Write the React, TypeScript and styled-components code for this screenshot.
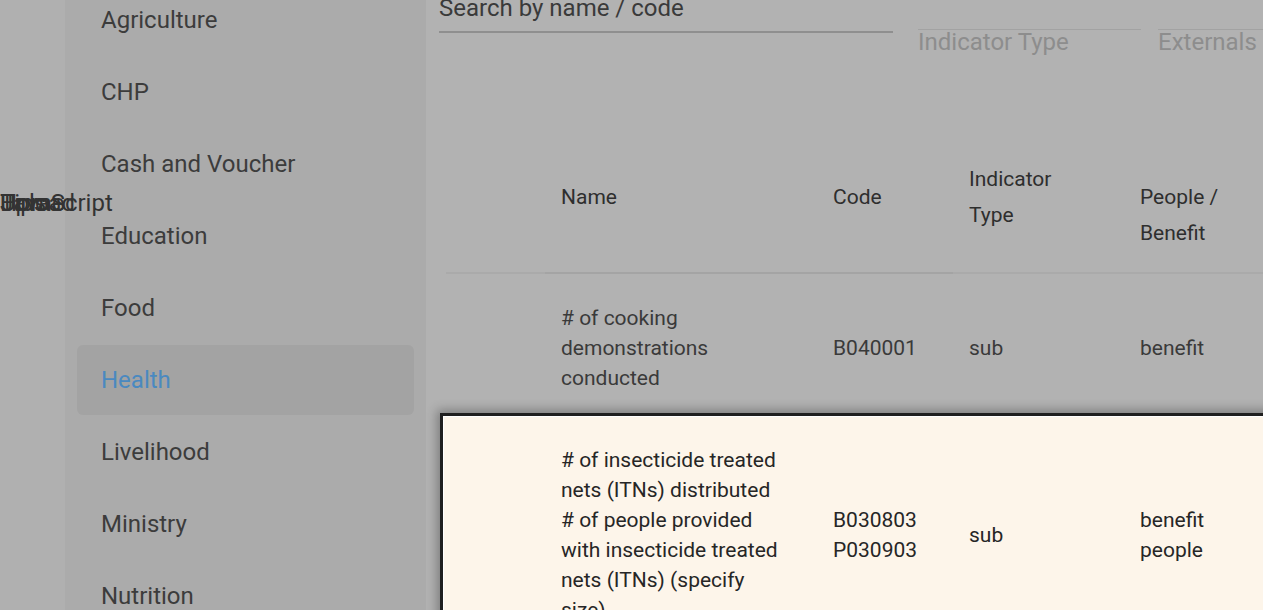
import React from "react";
import styled, { createGlobalStyle } from "styled-components";

const Global = createGlobalStyle`
  html, body { margin: 0; padding: 0; overflow: hidden; background: #b2b2b2; }
  body { font-family: Roboto, "Liberation Sans", Arial, sans-serif; }
  * { box-sizing: border-box; }
`;

const Root = styled.div`
  position: relative;
  display: flex;
  width: 1263px;
  height: 610px;
  overflow: hidden;
`;

const LeftStrip = styled.div`
  width: 65px;
  flex: none;
  background: #b0b0b0;
`;

const Sidebar = styled.nav`
  width: 361px;
  flex: none;
  background: #ababab;
  overflow: hidden;
`;

const NavList = styled.ul`
  list-style: none;
  display: flex;
  flex-direction: column;
  gap: 2px;
  margin: -15px 0 0;
  padding: 0;
`;

const NavItem = styled.li<{ $active?: boolean }>`
  display: flex;
  align-items: center;
  height: 70px;
  margin: 0 12px;
  padding-left: 24px;
  border-radius: 6px;
  font-size: 24px;
  color: ${(p) => (p.$active ? "#4a89c0" : "#3c3c3c")};
  background: ${(p) => (p.$active ? "#a3a3a3" : "transparent")};
`;

const StackedLabels = styled.div`
  position: absolute;
  left: 0;
  top: 189px;
  display: grid;
  font-size: 24px;
  line-height: 28px;
  color: #333;
  z-index: 2;
  & > span {
    grid-area: 1 / 1;
    white-space: nowrap;
  }
`;

const Main = styled.main`
  flex: 1;
  min-width: 0;
  background: #b2b2b2;
  padding-left: 20px;
  overflow: hidden;
  display: flex;
  flex-direction: column;
`;

const FilterBar = styled.div`
  display: flex;
  align-items: flex-start;
  height: 128px;
  margin-top: -6px;
  margin-left: -7px;
  flex: none;
`;

const SearchField = styled.div`
  width: 454px;
  flex: none;
  font-size: 24px;
  line-height: 28px;
  color: #3a3a3a;
  padding-bottom: 9px;
  border-bottom: 2px solid #8f8f8f;
`;

const SelectField = styled.div<{ $w: number; $gap: number }>`
  width: ${(p) => p.$w}px;
  flex: none;
  margin-left: ${(p) => p.$gap}px;
  margin-top: 35px;
  border-top: 1px solid #a2a2a2;
  font-size: 24px;
  line-height: 24px;
  color: #8d8d8d;
  white-space: nowrap;
`;

const Table = styled.div`
  width: 1000px;
  flex: none;
`;

const RowGrid = styled.div`
  display: grid;
  grid-template-columns: 99px 272px 136px 171px 1fr;
`;

const HeadRow = styled(RowGrid)`
  height: 152px;
`;

const HeadCell = styled.div<{ $dark?: boolean; $pad?: number }>`
  display: flex;
  align-items: center;
  padding: ${(p) => p.$pad || 0}px 16px 0;
  font-size: 21px;
  font-weight: 400;
  line-height: 36px;
  color: #2e2e2e;
  border-bottom: 2px solid ${(p) => (p.$dark ? "#a4a4a4" : "#aaaaaa")};
`;

const BodyRow = styled(RowGrid)`
  padding: 29px 0 20px;
`;

const HighlightRow = styled(RowGrid)`
  position: relative;
  z-index: 1;
  margin-left: -6px;
  padding: 29px 0 20px 3px;
  border: 3px solid #1f1f1f;
  background: #fdf5ea;
  box-shadow: 0 0 10px 3px rgba(0, 0, 0, 0.3), inset 0 0 0 1px #ffffff;
`;

const Cell = styled.div<{ $strong?: boolean }>`
  display: flex;
  flex-direction: column;
  justify-content: center;
  padding: 0 16px;
  font-size: 21px;
  line-height: 30px;
  color: ${(p) => (p.$strong ? "#262626" : "#3a3a3a")};
`;

const NameText = styled.div`
  max-width: 222px;
`;

const categories = [
  "Agriculture",
  "CHP",
  "Cash and Voucher",
  "Education",
  "Food",
  "Health",
  "Livelihood",
  "Ministry",
  "Nutrition",
];

export default function App() {
  return (
    <>
      <Global />
      <Root>
        <LeftStrip />
        <Sidebar>
          <NavList>
            {categories.map((c) => (
              <NavItem key={c} $active={c === "Health"}>
                {c}
              </NavItem>
            ))}
          </NavList>
        </Sidebar>
        <StackedLabels aria-hidden>
          <span>JavaScript</span>
          <span>Upload</span>
          <span>Home</span>
          <span>Tips</span>
        </StackedLabels>
        <Main>
          <FilterBar>
            <SearchField>Search by name / code</SearchField>
            <SelectField $w={223} $gap={25}>Indicator Type</SelectField>
            <SelectField $w={160} $gap={17}>Externals</SelectField>
          </FilterBar>
          <Table>
            <HeadRow>
              <HeadCell />
              <HeadCell $dark>Name</HeadCell>
              <HeadCell $dark>Code</HeadCell>
              <HeadCell>
                <span>
                  Indicator
                  <br />
                  Type
                </span>
              </HeadCell>
              <HeadCell $pad={36}>
                <span>
                  People /
                  <br />
                  Benefit
                </span>
              </HeadCell>
            </HeadRow>
            <BodyRow>
              <Cell />
              <Cell>
                <NameText># of cooking demonstrations conducted</NameText>
              </Cell>
              <Cell>B040001</Cell>
              <Cell>sub</Cell>
              <Cell>benefit</Cell>
            </BodyRow>
            <HighlightRow>
              <Cell />
              <Cell $strong>
                <NameText># of insecticide treated nets (ITNs) distributed</NameText>
                <NameText>
                  # of people provided with insecticide treated nets (ITNs)
                  (specify size)
                </NameText>
              </Cell>
              <Cell $strong>
                <span>B030803</span>
                <span>P030903</span>
              </Cell>
              <Cell $strong>sub</Cell>
              <Cell $strong>
                <span>benefit</span>
                <span>people</span>
              </Cell>
            </HighlightRow>
          </Table>
        </Main>
      </Root>
    </>
  );
}
